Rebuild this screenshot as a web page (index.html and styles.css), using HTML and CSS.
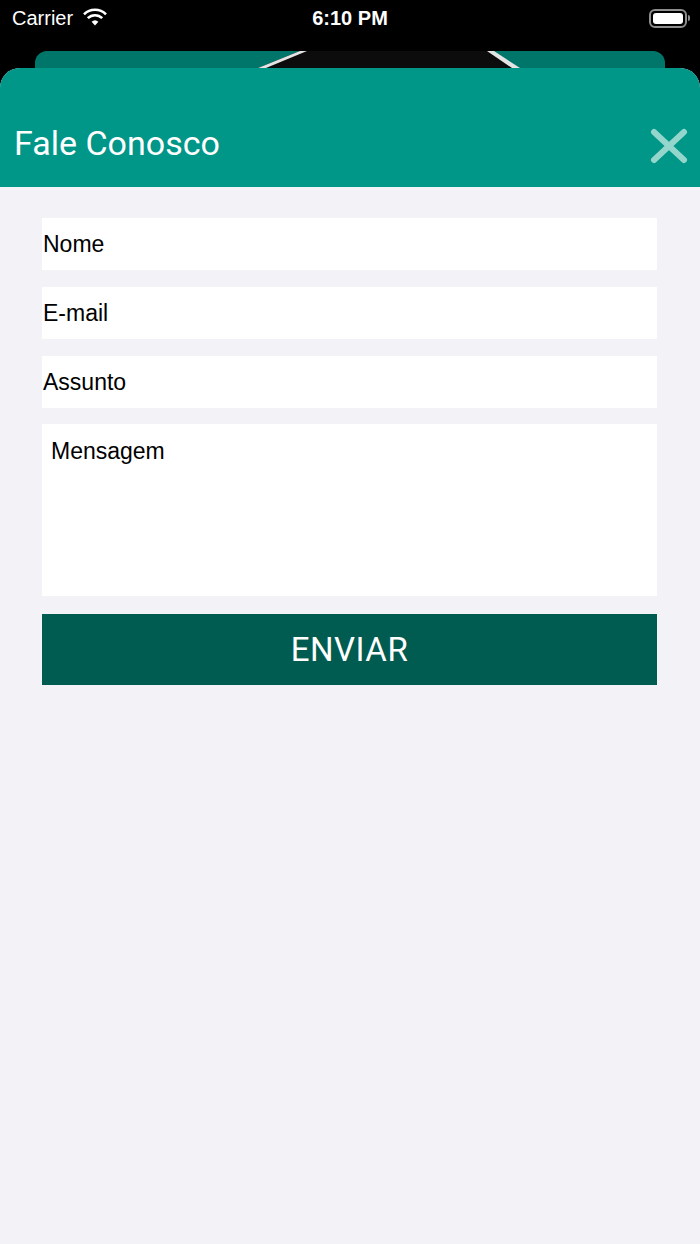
FILE: index.html
```html
<!DOCTYPE html>
<html lang="pt-br">
<head>
    <meta charset="UTF-8">
    <meta name="viewport" content="width=device-width, initial-scale=1.0">
    <title>Fale Conosco</title>
    <link rel="stylesheet" href="styles.css">
</head>
<body>
    <div class="status-bar">
        <div class="status-left">
            <span>Carrier</span>
            <svg class="wifi" width="26" height="18" viewBox="0 0 26 18">
                <path d="M13 17.5 L9.6 13.8 A5 5 0 0 1 16.4 13.8 Z" fill="#fff"/>
                <path d="M5.8 10.2 A10.2 10.2 0 0 1 20.2 10.2" stroke="#fff" stroke-width="2.6" fill="none"/>
                <path d="M2 6.4 A15.5 15.5 0 0 1 24 6.4" stroke="#fff" stroke-width="2.6" fill="none"/>
            </svg>
        </div>
        <div class="status-time">6:10 PM</div>
        <div class="status-right">
            <div class="battery"><div class="battery-level"></div></div>
            <div class="battery-tip"></div>
        </div>
    </div>

    <div class="back-card">
        <svg class="back-logo" width="630" height="17" viewBox="0 0 630 17">
            <polygon points="223,17 265,0 453,0 478,17" fill="#0c0c0c"/>
            <polygon points="223,17 231,17 272,0 265,0" fill="#e4e4e4"/>
            <polygon points="452,0 459,0 485,17 477,17" fill="#e4e4e4"/>
        </svg>
    </div>

    <div class="sheet">
        <div class="sheet-header">
            <h1>Fale Conosco</h1>
            <svg class="close" width="38" height="36" viewBox="0 0 38 36">
                <path d="M4 4 L34 32 M34 4 L4 32" stroke="#94d6cb" stroke-width="6" stroke-linecap="round"/>
            </svg>
        </div>

        <form class="contact-form">
            <input type="text" placeholder="Nome">
            <input type="text" placeholder="E-mail">
            <input type="text" class="last" placeholder="Assunto">
            <textarea placeholder="Mensagem"></textarea>
            <button type="button">ENVIAR</button>
        </form>
    </div>
</body>
</html>
```

FILE: styles.css
```css
html, body {
    margin: 0;
    padding: 0;
}

body {
    width: 700px;
    height: 1244px;
    background-color: #000;
    font-family: Roboto, "Liberation Sans", sans-serif;
    overflow: hidden;
}

.status-bar {
    height: 36px;
    display: flex;
    align-items: center;
    justify-content: space-between;
    padding: 0 10px 0 12px;
    color: #fff;
    font-family: "Liberation Sans", Arial, sans-serif;
}

.status-left {
    display: flex;
    align-items: center;
    gap: 9px;
    font-size: 20px;
    width: 150px;
}

.wifi {
    margin-top: -3px;
}

.status-time {
    font-size: 20px;
    font-weight: bold;
    margin-right: 2px;
}

.status-right {
    width: 150px;
    display: flex;
    justify-content: flex-end;
    align-items: center;
}

.battery {
    border: 2px solid #8e8e8e;
    border-radius: 6px;
    padding: 2px;
    box-sizing: border-box;
    width: 38px;
    height: 19px;
}

.battery-level {
    width: 100%;
    height: 100%;
    background-color: #fff;
    border-radius: 3px;
}

.battery-tip {
    width: 2px;
    height: 6px;
    background-color: #8e8e8e;
    border-radius: 0 2px 2px 0;
    margin-left: 1px;
}

.back-card {
    margin: 15px 35px 0;
    height: 30px;
    background-color: #00766a;
    border-radius: 12px 12px 0 0;
    overflow: hidden;
}

.back-logo {
    display: block;
}

.sheet {
    margin-top: -13px;
    background-color: #f2f2f7;
    border-radius: 20px 20px 0 0;
    height: 1176px;
    overflow: hidden;
}

.sheet-header {
    height: 119px;
    background-color: #009688;
    display: flex;
    align-items: flex-end;
    justify-content: space-between;
    padding: 0 12px 21px 14px;
    box-sizing: border-box;
}

.sheet-header h1 {
    margin: 0;
    color: #fff;
    font-weight: normal;
    font-size: 34px;
    line-height: 40px;
    margin-bottom: 3px;
}

.close {
    margin-bottom: 2px;
}

.contact-form {
    display: flex;
    flex-direction: column;
    padding: 31px 43px 0 42px;
}

.contact-form input,
.contact-form textarea {
    border: none;
    outline: none;
    background-color: #fff;
    font-family: "Liberation Sans", Arial, sans-serif;
    font-size: 23px;
    box-sizing: border-box;
    margin: 0;
}

.contact-form input::placeholder,
.contact-form textarea::placeholder {
    color: #000;
}

.contact-form input {
    height: 52px;
    padding: 0 1px;
    margin-bottom: 17px;
}

.contact-form input.last {
    margin-bottom: 16px;
}

.contact-form textarea {
    height: 172px;
    padding: 14px 9px;
    resize: none;
}

.contact-form button {
    margin-top: 18px;
    height: 71px;
    border: none;
    background-color: #005b50;
    color: #fff;
    font-family: Roboto, "Liberation Sans", sans-serif;
    font-size: 33px;
    letter-spacing: 0.5px;
    padding: 0;
    cursor: pointer;
}
```
